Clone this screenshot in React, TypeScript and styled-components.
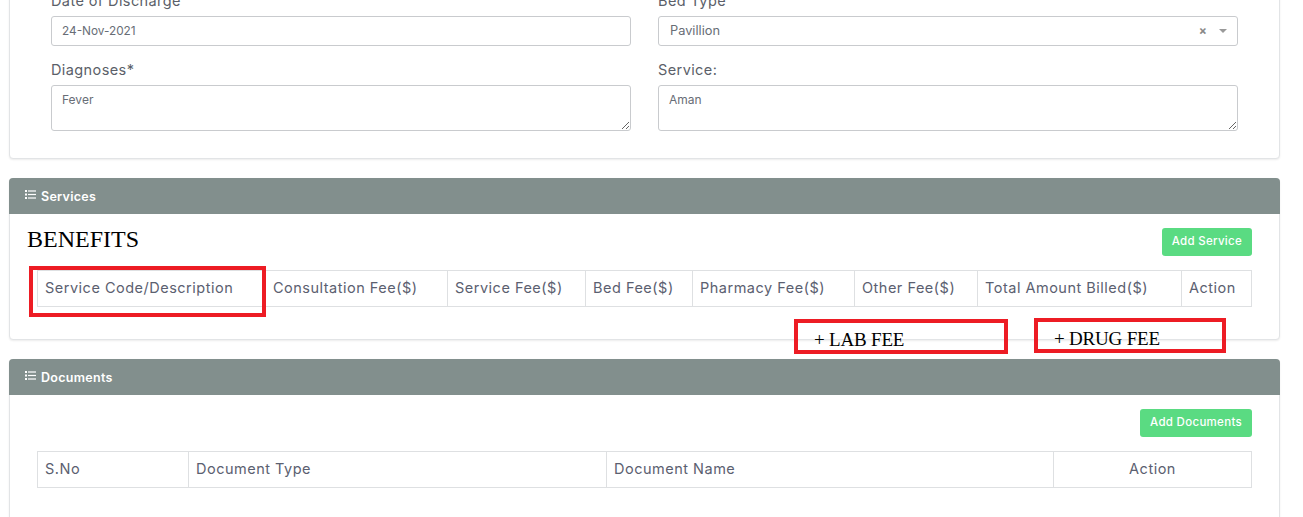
import React from 'react';
import styled, { createGlobalStyle } from 'styled-components';

const GlobalStyle = createGlobalStyle`
  html, body {
    margin: 0;
    padding: 0;
    background: #fff;
    overflow: hidden;
  }
`;

const Viewport = styled.div`
  height: 517px;
  overflow: hidden;
  font-family: Inter, "Open Sans", sans-serif;
`;

const Page = styled.div`
  margin-top: -37px;
  padding: 0 23px 0 9px;
  display: flex;
  flex-direction: column;
  gap: 19px;
`;

const Card = styled.section`
  position: relative;
  background: #fff;
  border: 1px solid #e2e4e6;
  border-radius: 4px;
  box-shadow: 0 1px 2px rgba(0, 0, 0, 0.08);
`;

const FormGrid = styled.div`
  display: grid;
  grid-template-columns: 580px 580px;
  column-gap: 27px;
  row-gap: 13px;
  padding: 26px 41px 27px;
`;

const Field = styled.div`
  display: flex;
  flex-direction: column;
  gap: 4px;
`;

const Label = styled.label`
  font-size: 14.5px;
  letter-spacing: 0.4px;
  line-height: 22px;
  color: #5b5f69;
`;

const TextInput = styled.input`
  box-sizing: border-box;
  width: 100%;
  height: 30px;
  padding: 0 10px;
  border: 1px solid #c9cbce;
  border-radius: 3px;
  font: inherit;
  font-size: 11.8px;
  color: #686d76;
  outline: none;
`;

const TextArea = styled.textarea`
  box-sizing: border-box;
  display: block;
  width: 100%;
  height: 46px;
  padding: 7px 10px;
  border: 1px solid #c9cbce;
  border-radius: 3px;
  font: inherit;
  font-size: 12px;
  line-height: 14px;
  color: #686d76;
  outline: none;
  resize: vertical;
`;

const SelectBox = styled.div`
  box-sizing: border-box;
  height: 30px;
  padding: 0 10px 1px 11px;
  display: flex;
  align-items: center;
  border: 1px solid #c9cbce;
  border-radius: 3px;
  font-size: 12.8px;
  color: #686d76;
`;

const SelectValue = styled.span`
  flex: 1;
`;

const ClearMark = styled.span`
  font-size: 12px;
  font-weight: 700;
  color: #888;
  margin-right: 12px;
`;

const Caret = styled.span`
  width: 0;
  height: 0;
  border-left: 4px solid transparent;
  border-right: 4px solid transparent;
  border-top: 4px solid #999;
`;

const CardHeader = styled.header`
  box-sizing: border-box;
  height: 36px;
  margin: -1px -1px 0;
  padding: 0 16px;
  display: flex;
  align-items: center;
  gap: 5px;
  background: #828f8d;
  border-radius: 4px 4px 0 0;
  color: #fff;
  font-size: 12.5px;
  letter-spacing: 0.3px;
  font-weight: 600;
`;

const CardBody = styled.div<{ $bottom: number }>`
  padding: 14px 27px ${props => props.$bottom}px 17px;
  display: flex;
  flex-direction: column;
  gap: 14px;
`;

const TitleRow = styled.div`
  display: flex;
  align-items: flex-start;
  justify-content: space-between;
  height: 28px;
`;

const BodyTitle = styled.h2`
  margin: 0;
  font-family: "Liberation Serif", serif;
  font-size: 24px;
  line-height: 22px;
  font-weight: 400;
  color: #000;
`;

const AddButton = styled.button`
  height: 28px;
  margin-left: auto;
  padding: 0 10px 2px;
  background: #5adb82;
  border: 0;
  border-radius: 3px;
  color: #fff;
  font-family: inherit;
  font-size: 11.5px;
  letter-spacing: 0.3px;
  font-weight: 500;
`;

const Table = styled.table`
  margin-left: 10px;
  width: 1214px;
  table-layout: fixed;
  border-collapse: collapse;
`;

const Th = styled.th<{ $width: number; $center?: boolean }>`
  width: ${props => props.$width}px;
  height: 36px;
  padding: 0 7px 2px;
  box-sizing: border-box;
  border: 1px solid #dee0e2;
  font-size: 14.5px;
  letter-spacing: 0.5px;
  font-weight: 400;
  color: #5b6070;
  white-space: nowrap;
  text-align: ${props => (props.$center ? 'center' : 'left')};
`;

const RedBox = styled.div<{ $left: number; $top: number; $w: number; $h: number }>`
  position: absolute;
  left: ${props => props.$left}px;
  top: ${props => props.$top}px;
  width: ${props => props.$w}px;
  height: ${props => props.$h}px;
  box-sizing: border-box;
  padding: 6px 0 0 16px;
  display: flex;
  align-items: center;
  border: 4px solid #ed1c24;
  font-family: "Liberation Serif", serif;
  font-size: 19px;
  letter-spacing: -0.2px;
  color: #000;
  white-space: nowrap;
`;

const ListIcon = () => (
  <svg width="11" height="11" viewBox="0 0 11 11" fill="#fff" style={{ marginTop: -4 }}>
    <rect x="0" y="1" width="2" height="2" />
    <rect x="0" y="4.5" width="2" height="2" />
    <rect x="0" y="8" width="2" height="2" />
    <rect x="3" y="1.4" width="8" height="1.2" />
    <rect x="3" y="4.9" width="8" height="1.2" />
    <rect x="3" y="8.4" width="8" height="1.2" />
  </svg>
);

const serviceColumns: [string, number][] = [
  ['Service Code/Description', 228],
  ['Consultation Fee($)', 182],
  ['Service Fee($)', 138],
  ['Bed Fee($)', 107],
  ['Pharmacy Fee($)', 162],
  ['Other Fee($)', 123],
  ['Total Amount Billed($)', 204],
  ['Action', 70],
];

export default function App() {
  return (
    <Viewport>
      <GlobalStyle />
      <Page>
        <Card>
          <FormGrid>
            <Field>
              <Label>Date of Discharge</Label>
              <TextInput readOnly value="24-Nov-2021" />
            </Field>
            <Field>
              <Label>Bed Type</Label>
              <SelectBox>
                <SelectValue>Pavillion</SelectValue>
                <ClearMark>×</ClearMark>
                <Caret />
              </SelectBox>
            </Field>
            <Field>
              <Label>Diagnoses*</Label>
              <TextArea readOnly value="Fever" />
            </Field>
            <Field>
              <Label>Service:</Label>
              <TextArea readOnly value="Aman" />
            </Field>
          </FormGrid>
        </Card>

        <Card>
          <CardHeader>
            <ListIcon />
            Services
          </CardHeader>
          <CardBody $bottom={32}>
            <TitleRow>
              <BodyTitle>BENEFITS</BodyTitle>
              <AddButton>Add Service</AddButton>
            </TitleRow>
            <Table>
              <thead>
                <tr>
                  {serviceColumns.map(([name, width]) => (
                    <Th key={name} $width={width}>{name}</Th>
                  ))}
                </tr>
              </thead>
            </Table>
          </CardBody>
          <RedBox $left={19} $top={87} $w={237} $h={51} />
          <RedBox $left={784} $top={140} $w={214} $h={35}>+ LAB FEE</RedBox>
          <RedBox $left={1024} $top={139} $w={192} $h={35}>+ DRUG FEE</RedBox>
        </Card>

        <Card>
          <CardHeader>
            <ListIcon />
            Documents
          </CardHeader>
          <CardBody $bottom={40}>
            <AddButton>Add Documents</AddButton>
            <Table>
              <thead>
                <tr>
                  <Th $width={151}>S.No</Th>
                  <Th $width={418}>Document Type</Th>
                  <Th $width={447}>Document Name</Th>
                  <Th $width={198} $center>Action</Th>
                </tr>
              </thead>
            </Table>
          </CardBody>
        </Card>
      </Page>
    </Viewport>
  );
}
